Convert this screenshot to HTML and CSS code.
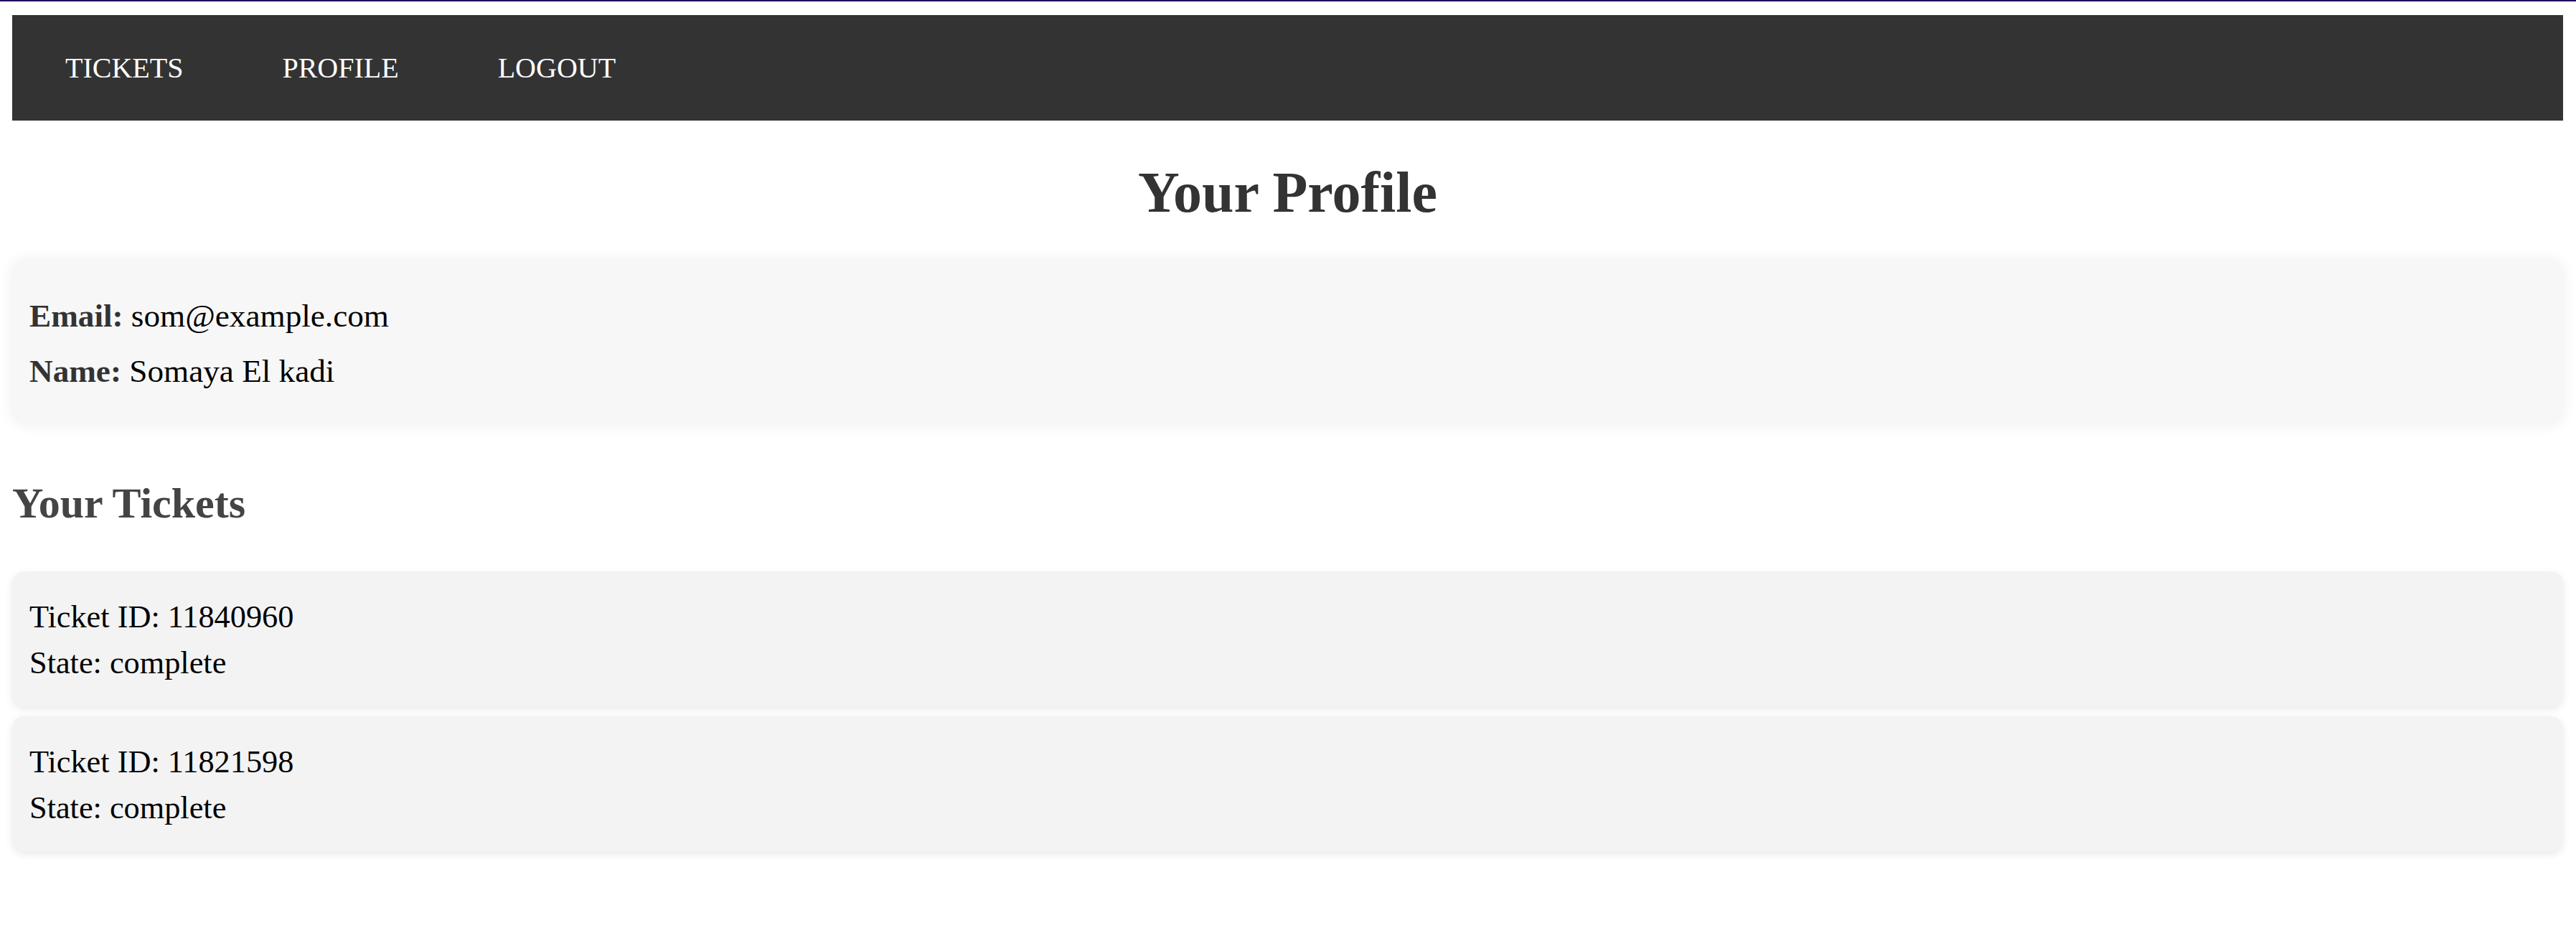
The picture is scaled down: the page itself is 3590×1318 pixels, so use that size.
FILE: index.html
```html
<!DOCTYPE html>
<html lang="en">
<head>
<meta charset="utf-8">
<title>Your Profile</title>
<link rel="stylesheet" href="styles.css">
</head>
<body>
<div class="topline"></div>
<div class="page">
  <nav class="navbar">
    <a class="nav-link" href="#">TICKETS</a>
    <a class="nav-link" href="#">PROFILE</a>
    <a class="nav-link" href="#">LOGOUT</a>
  </nav>
  <h1 class="page-title">Your Profile</h1>
  <section class="profile-card">
    <p class="profile-row"><strong class="label">Email:</strong> som@example.com</p>
    <p class="profile-row"><strong class="label">Name:</strong> Somaya El kadi</p>
  </section>
  <h2 class="section-title">Your Tickets</h2>
  <div class="ticket-list">
    <div class="ticket-card">
      <p class="ticket-line">Ticket ID: 11840960</p>
      <p class="ticket-line">State: complete</p>
    </div>
    <div class="ticket-card">
      <p class="ticket-line">Ticket ID: 11821598</p>
      <p class="ticket-line">State: complete</p>
    </div>
  </div>
</div>
</body>
</html>
```

FILE: styles.css
```css
html, body {
  margin: 0;
  padding: 0;
  background: #ffffff;
}

body {
  font-family: "Liberation Serif", "Times New Roman", serif;
  color: #000000;
}

.topline {
  height: 2px;
  background: #22005a;
}

.page {
  padding: 19px 18px 40px 17px;
}

.navbar {
  display: flex;
  align-items: center;
  gap: 138px;
  height: 147px;
  padding: 0 0 0 74px;
  background: #333333;
}

.nav-link {
  color: #ffffff;
  text-decoration: none;
  font-size: 40px;
  line-height: 46px;
}

.page-title {
  margin: 55px 0 49px;
  text-align: center;
  font-size: 80px;
  line-height: 90px;
  font-weight: bold;
  color: #333333;
}

.profile-card {
  display: flex;
  flex-direction: column;
  gap: 27px;
  padding: 53px 24px 49px;
  background: #f7f7f7;
  border-radius: 18px;
  box-shadow: 0 0 20px rgba(0, 0, 0, 0.07);
}

.profile-row {
  margin: 0;
  font-size: 45.2px;
  line-height: 50px;
}

.label {
  color: #333333;
}

.section-title {
  margin: 77px 0 61px;
  font-size: 60px;
  line-height: 67px;
  font-weight: bold;
  color: #444444;
}

.ticket-list {
  display: flex;
  flex-direction: column;
  gap: 14px;
}

.ticket-card {
  padding: 32px 24px 28px;
  background: #f3f3f3;
  border-radius: 17px;
  box-shadow: 0 4px 12px rgba(0, 0, 0, 0.09);
}

.ticket-line {
  margin: 0;
  font-size: 44.3px;
  line-height: 64px;
}
```
